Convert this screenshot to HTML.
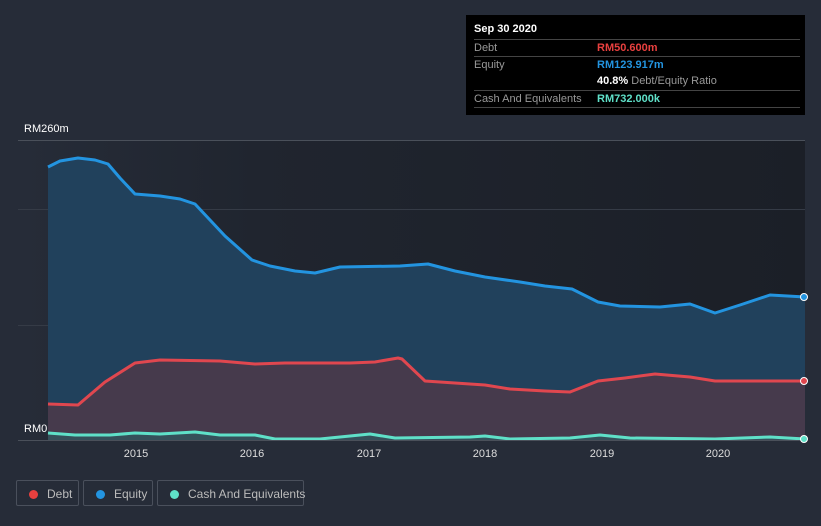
<!DOCTYPE html>
<html><head><style>
body{margin:0;width:821px;height:526px;background:#262c38;font-family:"Liberation Sans",sans-serif;overflow:hidden;position:relative}
.tt{position:absolute;left:466px;top:15px;width:339px;height:100px;background:#000;color:#fff;font-size:11px}
.row{position:absolute;left:8px;width:326px;border-top:1px solid #444;height:17px;line-height:17px;color:#999}
.v{position:absolute;left:123px;font-weight:bold}
.leg{position:absolute;top:480px;height:26px;border:1px solid #4a505c;border-radius:2px;color:#bbb;font-size:12px;line-height:26px;box-sizing:border-box;white-space:nowrap}
.dot{display:inline-block;width:9px;height:9px;border-radius:50%;margin:0 9px 0 12px;vertical-align:-1px}
</style></head><body>
<svg width="821" height="526" style="position:absolute;left:0;top:0">
<defs>
<linearGradient id="bg" x1="0" x2="1" y1="0" y2="0"><stop offset="0" stop-color="#262c38"/><stop offset="0.3" stop-color="#20252f"/><stop offset="1" stop-color="#1b1f27"/></linearGradient>
</defs>
<rect x="18" y="140" width="787" height="300" fill="url(#bg)"/>
<line x1="18" y1="140.5" x2="805" y2="140.5" stroke="#4a505a"/>
<line x1="18" y1="209.5" x2="805" y2="209.5" stroke="#353b46"/>
<line x1="18" y1="325.5" x2="805" y2="325.5" stroke="#353b46"/>
<polygon fill="#21415c" points="48,167 60,161 78,158 95,160 108,164 120,178 135,194 160,196 180,199 195,204 210,220 225,236 252,260 270,266 295,271 315,273 340,267 400,266 428,264 455,271 485,277 520,282 545,286 572,289 598,302 620,306 660,307 690,304 715,313 740,305 770,295 805,297 805,440 48,440"/>
<polygon fill="#463a4c" points="48,404 78,405 105,382 135,363 160,360 220,361 255,364 285,363 350,363 375,362 398,358 402,359 425,381 485,385 510,389 545,391 570,392 598,381 625,378 655,374 690,377 715,381 805,381 805,440 48,440"/>
<polygon fill="#35505a" points="48,433 75,435 110,435 135,433 160,434 195,432 220,435 255,435 275,439 320,439 370,434 395,438 470,437 485,436 510,439 570,438 600,435 630,438 715,439 770,437 805,439 805,440 48,440"/>
<polyline fill="none" stroke="#2394e0" stroke-width="3" stroke-linejoin="round" points="48,167 60,161 78,158 95,160 108,164 120,178 135,194 160,196 180,199 195,204 210,220 225,236 252,260 270,266 295,271 315,273 340,267 400,266 428,264 455,271 485,277 520,282 545,286 572,289 598,302 620,306 660,307 690,304 715,313 740,305 770,295 805,297"/>
<polyline fill="none" stroke="#e0474f" stroke-width="3" stroke-linejoin="round" points="48,404 78,405 105,382 135,363 160,360 220,361 255,364 285,363 350,363 375,362 398,358 402,359 425,381 485,385 510,389 545,391 570,392 598,381 625,378 655,374 690,377 715,381 805,381"/>
<polyline fill="none" stroke="#5fe0c8" stroke-width="3" stroke-linejoin="round" points="48,433 75,435 110,435 135,433 160,434 195,432 220,435 255,435 275,439 320,439 370,434 395,438 470,437 485,436 510,439 570,438 600,435 630,438 715,439 770,437 805,439"/>
<line x1="18" y1="440.5" x2="805" y2="440.5" stroke="#4a505a"/>
<circle cx="804" cy="297" r="3.5" fill="#2394e0" stroke="#fff" stroke-width="1"/>
<circle cx="804" cy="381" r="3.5" fill="#e0474f" stroke="#fff" stroke-width="1"/>
<circle cx="804" cy="439" r="3.5" fill="#5fe0c8" stroke="#fff" stroke-width="1"/>
<g fill="#fff" font-size="11" font-family="Liberation Sans,sans-serif">
<text x="24" y="132">RM260m</text><text x="24" y="432">RM0</text>
<g text-anchor="middle" fill="#ddd"><text x="136" y="457">2015</text><text x="252" y="457">2016</text><text x="369" y="457">2017</text><text x="485" y="457">2018</text><text x="602" y="457">2019</text><text x="718" y="457">2020</text></g>
</g>
</svg>
<div class="tt">
<div style="position:absolute;left:8px;top:8px;font-weight:bold">Sep 30 2020</div>
<div class="row" style="top:24px">Debt<span class="v" style="color:#e8403f">RM50.600m</span></div>
<div class="row" style="top:41px">Equity<span class="v" style="color:#2394e0">RM123.917m</span></div>
<div class="row" style="top:58px;border-top:none"><span class="v" style="color:#fff">40.8% <span style="color:#999;font-weight:normal">Debt/Equity Ratio</span></span></div>
<div class="row" style="top:75px">Cash And Equivalents<span class="v" style="color:#5fe0c8">RM732.000k</span></div>
<div class="row" style="top:92px;height:0"></div>
</div>
<div class="leg" style="left:16px;width:63px"><span class="dot" style="background:#e8403f"></span>Debt</div>
<div class="leg" style="left:83px;width:70px"><span class="dot" style="background:#2394e0"></span>Equity</div>
<div class="leg" style="left:157px;width:147px"><span class="dot" style="background:#5fe0c8"></span>Cash And Equivalents</div>
</body></html>
